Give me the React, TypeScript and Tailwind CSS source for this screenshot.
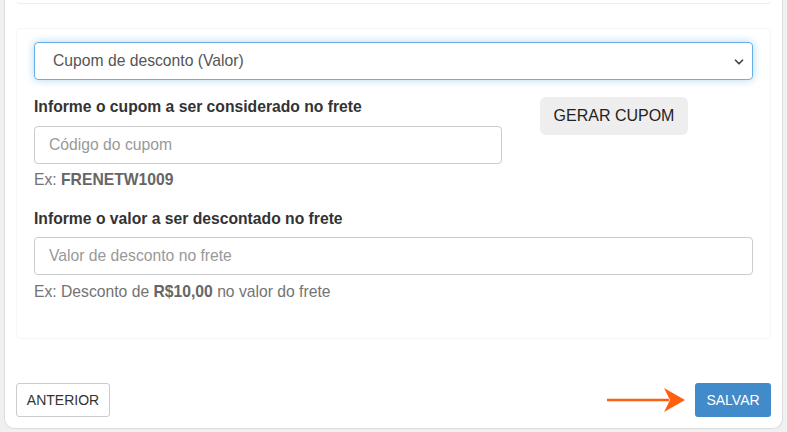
import { ChevronDown } from 'lucide-react';

export default function App() {
  return (
    <div className="h-[432px] overflow-hidden bg-[#f0f0f0] px-[4px] font-['Liberation_Sans',Arial,sans-serif]">
      <div className="h-[429px] rounded-b-[10px] border-x border-b border-[#dcdcdc] bg-white px-[11px]">
        {/* previous section edge */}
        <div className="h-[4px] rounded-b border-b border-[#eeeeee]" />

        {/* form card */}
        <div className="mt-[24px] rounded border border-[#f6f6f6] px-[17px] pt-[13px] pb-[36px]">
          <div className="relative flex h-[38px] items-center rounded border border-[#66afe9] pl-[18px] text-[15.7px] text-[#555] shadow-[0_0_8px_rgba(102,175,233,0.5)]">
            Cupom de desconto (Valor)
            <ChevronDown className="absolute right-[6px] top-[12px] text-[#444]" size={14} strokeWidth={3} />
          </div>

          <div className="mt-[17px] flex">
            <div className="w-[468px]">
              <label className="block h-[20px] text-[15.7px] font-bold leading-[20px] text-[#333]">
                Informe o cupom a ser considerado no frete
              </label>
              <input
                className="mt-[9px] block h-[38px] w-full rounded border border-[#cccccc] px-[14px] text-[15.7px] text-[#555] outline-none placeholder:text-[#999]"
                placeholder="Código do cupom"
              />
              <p className="mt-[6px] h-[20px] text-[15.7px] leading-[20px] text-[#737373]">
                Ex: <b className="text-[#666]">FRENETW1009</b>
              </p>
            </div>
            <div className="ml-[38px]">
              <button className="h-[38px] w-[148px] rounded-md bg-[#eeeeee] text-[16px] text-[#222]">
                GERAR CUPOM
              </button>
            </div>
          </div>

          <label className="mt-[19px] block h-[20px] text-[15.7px] font-bold leading-[20px] text-[#333]">
            Informe o valor a ser descontado no frete
          </label>
          <input
            className="mt-[8px] block h-[38px] w-full rounded border border-[#cccccc] px-[14px] text-[15.7px] text-[#555] outline-none placeholder:text-[#999]"
            placeholder="Valor de desconto no frete"
          />
          <p className="mt-[7px] h-[20px] text-[15.7px] leading-[20px] text-[#737373]">
            Ex: Desconto de <b className="text-[#666]">R$10,00</b> no valor do frete
          </p>
        </div>

        <div className="mt-[44px] flex items-center justify-between">
          <button className="h-[34px] w-[94px] rounded-[3px] border border-[#cccccc] bg-white text-[14px] text-[#333]">
            ANTERIOR
          </button>
          <div className="flex items-center gap-[10px]">
            <svg width="78" height="26" viewBox="0 0 78 26">
              <line x1="0" y1="13" x2="62" y2="13" stroke="#ff5f0f" strokeWidth="2.5" />
              <path d="M57 1 L78 13 L57 25 L63 13 Z" fill="#ff5f0f" />
            </svg>
            <button className="h-[34px] w-[76px] rounded-[3px] bg-[#428bca] text-[14px] text-white">
              SALVAR
            </button>
          </div>
        </div>
      </div>
    </div>
  );
}
